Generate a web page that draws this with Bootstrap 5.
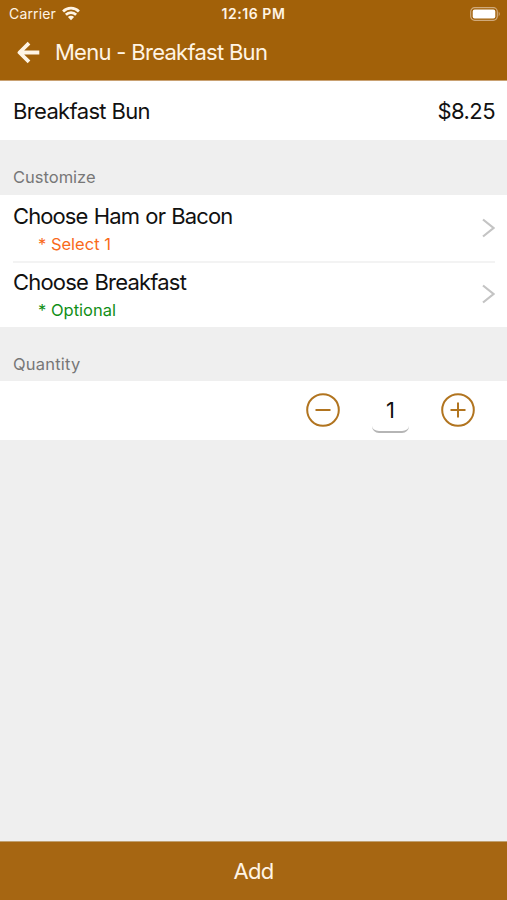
<!DOCTYPE html>
<html lang="en">
<head>
<meta charset="utf-8">
<meta name="viewport" content="width=device-width, initial-scale=1">
<title>Menu - Breakfast Bun</title>
<link href="https://cdn.jsdelivr.net/npm/bootstrap@5.3.0/dist/css/bootstrap.min.css" rel="stylesheet">
<style>
body{font-family:Inter,"Liberation Sans",sans-serif;background:#efefef;color:#111;font-size:22px;line-height:28px}
.app-head{background:#a26109;height:80px;color:#fff4e4;box-shadow:0 1px 0 #c9a172}
.status{height:27px;padding:0 6px 0 9px;font-size:14px;line-height:27px}
.status>*{flex:1 1 0}
.carrier{letter-spacing:.15px;margin-right:6px}
.clock{letter-spacing:.55px;padding-right:3px}
.title-bar{height:51px;padding-left:17px;gap:14px}
.title-bar h1{font-size:22px;line-height:28px;font-weight:400;letter-spacing:-.75px;word-spacing:.2px;padding-bottom:1px}
.item-row{height:60px;padding:2px 12px 0 13px}
.item-name{letter-spacing:-.65px}
.price{letter-spacing:-.55px}
.section-label{height:55px;padding:0 13px 6px;font-size:16.5px;line-height:24px;color:#777}
.options{padding:0 12px 0 13px;height:132px}
.option{height:66px}
.option+.option{box-shadow:inset 0 2px 0 #f3f3f3}
.option-name{letter-spacing:-.9px;word-spacing:1px}
.option+.option .option-name{letter-spacing:-.8px;word-spacing:1px}
.option-text{padding-top:4px}
.option .hint{font-size:16.5px;line-height:28px;padding-left:25px}
.need{color:#f96a1b}.extra{color:#118f17}
.qty-label{height:54px;padding-bottom:5px}
.qty-label span{letter-spacing:.2px}
.qty{height:59px;padding:0 32px 1px 0;gap:32px}
.count{width:37px;height:46px;padding-top:1px;border-radius:7px;border-bottom:2px solid #b5b5b5}
.round{width:34px;height:34px}
.add{height:58px;padding-top:6px;background:#a66612;color:#fff4e4;box-shadow:0 -1px 0 #c0a070;font-size:22px;letter-spacing:-.7px;border-radius:0}
.add:hover{background:#985c0e;color:#fff}
svg{display:block}
</style>
<script src="https://cdn.jsdelivr.net/npm/bootstrap@5.3.0/dist/js/bootstrap.bundle.min.js"></script>
</head>
<body class="d-flex flex-column vh-100 overflow-hidden">
<header class="app-head position-relative flex-shrink-0">
  <div class="status d-flex align-items-center">
    <div class="d-flex align-items-center"><span class="carrier">Carrier</span>
      <svg width="18" height="15" viewBox="0 0 20 16" fill="none" stroke="#fff4e4" stroke-width="3"><path d="M1.200 5.800a12.400 12.400 0 0 1 17.600 0M4.300 9.400a8 8 0 0 1 11.400 0"/><path d="M10 15.500 6.600 12a4.800 4.800 0 0 1 6.800 0z" fill="#fff4e4" stroke="none"/></svg>
    </div>
    <div class="clock text-center fw-semibold">12:16 PM</div>
    <div class="d-flex justify-content-end">
      <svg width="31" height="14" viewBox="0 0 31 14"><rect x=".7" y=".7" width="26.600" height="12.600" rx="4" fill="none" stroke="#d0aa7c" stroke-width="1.200"/><rect x="2.700" y="2.600" width="22.600" height="8.800" rx="2" fill="#fff"/><path d="M28.700 4.600q2.200 2.400 0 4.800z" fill="#d0aa7c"/></svg>
    </div>
  </div>
  <div class="title-bar d-flex align-items-center">
    <svg width="24" height="24" viewBox="0 0 24 24" fill="none" stroke="#fff4e4" stroke-width="3.800" stroke-linejoin="round"><path d="M22.300 11.500H3M12 2.200 2.500 11.500 12 20.800"/></svg>
    <h1 class="m-0">Menu - Breakfast Bun</h1>
  </div>
</header>
<main class="flex-grow-1">
  <div class="item-row bg-white d-flex justify-content-between align-items-center"><span class="item-name">Breakfast Bun</span><span class="price">$8.25</span></div>
  <div class="section-label d-flex align-items-end"><span>Customize</span></div>
  <div class="options bg-white">
    <div class="option d-flex justify-content-between align-items-center">
      <div class="option-text"><div class="option-name">Choose Ham or Bacon</div><div class="hint need">* Select 1</div></div>
      <svg width="13" height="20" viewBox="0 0 13 20" fill="none" stroke="#c4c4c4" stroke-width="2.200"><path d="m1 1.500 10.500 8.500L1 18.500"/></svg>
    </div>
    <div class="option d-flex justify-content-between align-items-center">
      <div class="option-text"><div class="option-name">Choose Breakfast</div><div class="hint extra">* Optional</div></div>
      <svg width="13" height="20" viewBox="0 0 13 20" fill="none" stroke="#c4c4c4" stroke-width="2.200"><path d="m1 1.500 10.500 8.500L1 18.500"/></svg>
    </div>
  </div>
  <div class="section-label qty-label d-flex align-items-end"><span>Quantity</span></div>
  <div class="qty bg-white d-flex justify-content-end align-items-center">
    <button type="button" class="btn p-0 border-0 round" aria-label="Decrease"><svg width="34" height="34" viewBox="0 0 34 34" fill="none" stroke="#b1741f" stroke-width="2"><circle cx="17" cy="17" r="15.800"/><path d="M9.500 17h15"/></svg></button>
    <div class="count d-flex justify-content-center align-items-center">1</div>
    <button type="button" class="btn p-0 border-0 round" aria-label="Increase"><svg width="34" height="34" viewBox="0 0 34 34" fill="none" stroke="#b1741f" stroke-width="2"><circle cx="17" cy="17" r="15.800"/><path d="M9.500 17h15M17 9.500v15"/></svg></button>
  </div>
</main>
<button type="button" class="btn add w-100 border-0 flex-shrink-0">Add</button>
</body>
</html>
